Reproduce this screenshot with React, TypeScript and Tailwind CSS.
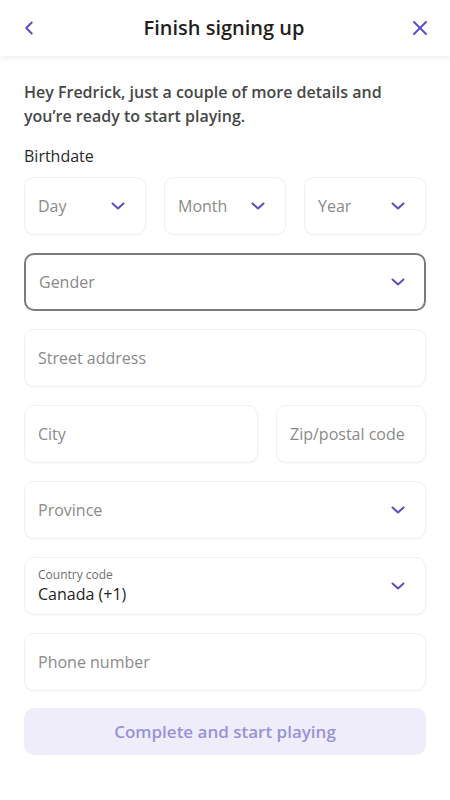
import { ChevronLeft, X } from "lucide-react";

function Chevron() {
  return (
    <svg width="16" height="16" viewBox="0 0 16 16" fill="none" className="shrink-0">
      <path d="M2.5 5.5L8 10.5L13.5 5.5" stroke="#5a4fc2" strokeWidth="2" strokeLinecap="round" strokeLinejoin="round" />
    </svg>
  );
}

function Field({ label, select, focused, className = "" }: { label: string; select?: boolean; focused?: boolean; className?: string }) {
  return (
    <div
      className={`h-[58px] rounded-[10px] bg-white flex items-center justify-between ${
        focused ? "border-2 border-[#7b7b7b] pl-[13px] pr-[18px]" : "border border-[#f0f0f0] pl-[13px] pr-[19px] shadow-[0_1px_2px_rgba(0,0,0,0.03)]"
      } ${className}`}
    >
      <span className="text-[16px] text-[#8a8a8a] whitespace-nowrap">{label}</span>
      {select && <Chevron />}
    </div>
  );
}

export default function App() {
  return (
    <div className="min-h-screen bg-white text-[#222]" style={{ fontFamily: '"Open Sans", sans-serif' }}>
      {/* Header */}
      <div className="h-[56px] flex items-center justify-between px-[18px] shadow-[0_2px_6px_rgba(0,0,0,0.07)]">
        <ChevronLeft size={22} strokeWidth={2.2} className="text-[#5a4fc2]" />
        <h1 className="text-[20px] font-semibold text-[#1f1f1f]">Finish signing up</h1>
        <X size={24} strokeWidth={2} className="text-[#5a4fc2]" />
      </div>

      <div className="px-6 pt-[24px]">
        <p className="text-[16px] leading-[24px] font-semibold text-[#474747]">
          Hey Fredrick, just a couple of more details and you’re ready to start playing.
        </p>
        <div className="mt-[16px] text-[16px] leading-[24px] text-[#2a2a2a]">Birthdate</div>

        <div className="mt-[9px] flex flex-col gap-[18px]">
          <div className="grid grid-cols-3 gap-[18px]">
            <Field label="Day" select />
            <Field label="Month" select />
            <Field label="Year" select />
          </div>
          <Field label="Gender" select focused />
          <Field label="Street address" />
          <div className="flex gap-[18px]">
            <Field label="City" className="flex-1" />
            <Field label="Zip/postal code" className="w-[150px]" />
          </div>
          <Field label="Province" select />
          <div className="h-[58px] rounded-[10px] bg-white border border-[#f0f0f0] shadow-[0_1px_2px_rgba(0,0,0,0.03)] flex items-center justify-between pl-[13px] pr-[19px]">
            <div className="flex flex-col">
              <span className="text-[12px] leading-[16px] text-[#707070]">Country code</span>
              <span className="text-[16px] leading-[22px] text-[#1f1f1f]">Canada (+1)</span>
            </div>
            <Chevron />
          </div>
          <Field label="Phone number" />
          <button className="h-[47px] w-full rounded-[10px] bg-[#eeedf9] text-[17px] font-semibold text-[#9992d8] -mt-[1px]">
            Complete and start playing
          </button>
        </div>
      </div>
    </div>
  );
}
